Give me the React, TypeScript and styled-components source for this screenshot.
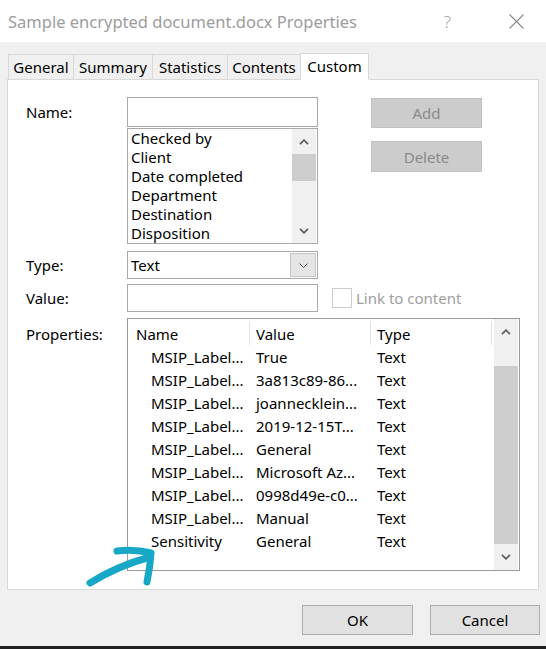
import React from 'react';
import styled, { createGlobalStyle } from 'styled-components';

const GlobalStyle = createGlobalStyle`
  html, body {
    margin: 0;
    padding: 0;
  }
  body {
    background: #f0f0f0;
    font-family: "Noto Sans", "Open Sans", sans-serif;
    font-size: 15px;
    color: #000;
  }
`;

const Window = styled.div`
  position: relative;
  width: 546px;
  height: 649px;
  display: flex;
  flex-direction: column;
  background: #f0f0f0;
  overflow: hidden;
`;

const TitleBar = styled.div`
  height: 42px;
  flex-shrink: 0;
  background: #fff;
  display: flex;
  align-items: center;
  padding-left: 8px;
  color: #9c9c9c;
  font-size: 16.5px;
`;

const TitleText = styled.span`
  flex: 1;
`;

const HelpMark = styled.span`
  font-size: 17px;
  font-weight: 300;
  color: #a0a0a0;
  margin-right: 58px;
`;

const CloseIcon = styled.svg`
  margin-right: 22px;
`;

const Body = styled.div`
  flex: 1;
  display: flex;
  flex-direction: column;
  padding: 11px 7px 0;
`;

const TabStrip = styled.div`
  position: relative;
  z-index: 1;
  display: flex;
  align-items: flex-end;
  height: 27px;
  padding-left: 1px;
  margin-bottom: -1px;
`;

const Tab = styled.div<{ $active?: boolean; $w: number }>`
  box-sizing: border-box;
  width: ${p => p.$w}px;
  height: ${p => (p.$active ? '27px' : '26px')};
  line-height: 24px;
  text-align: center;
  margin-left: -1px;
  border: 1px solid #d9d9d9;
  border-bottom: ${p => (p.$active ? '1px solid #fff' : '1px solid #d9d9d9')};
  background: ${p => (p.$active ? '#fff' : '#f0f0f0')};
  white-space: nowrap;
  &:first-child {
    margin-left: 0;
  }
`;

const Panel = styled.div`
  box-sizing: border-box;
  height: 511px;
  background: #fff;
  border: 1px solid #d9d9d9;
  padding: 17px 0 0 18px;
  display: flex;
  flex-direction: column;
`;

const Row = styled.div<{ $gap?: number }>`
  display: flex;
  align-items: flex-start;
  margin-top: ${p => p.$gap ?? 0}px;
`;

const Label = styled.div<{ $top?: number }>`
  width: 101px;
  flex-shrink: 0;
  padding-top: ${p => p.$top ?? 0}px;
  line-height: 28px;
`;

const FieldColumn = styled.div`
  width: 191px;
  display: flex;
  flex-direction: column;
`;

const TextBox = styled.div<{ $h: number }>`
  box-sizing: border-box;
  width: 191px;
  height: ${p => p.$h}px;
  border: 1px solid #a9a9a9;
  background: #fff;
`;

const ListBox = styled.div`
  box-sizing: border-box;
  margin-top: 1px;
  height: 116px;
  border: 1px solid #a9a9a9;
  display: flex;
  overflow: hidden;
`;

const ListItems = styled.div`
  flex: 1;
  padding-left: 3px;
  line-height: 19px;
  white-space: nowrap;
  overflow: hidden;
`;

const ScrollBar = styled.div<{ $width: number }>`
  width: ${p => p.$width}px;
  margin-right: 1px;
  background: #f0f0f0;
  display: flex;
  flex-direction: column;
  flex-shrink: 0;
`;

const ArrowButton = styled.div<{ $h: number }>`
  height: ${p => p.$h}px;
  display: flex;
  align-items: center;
  justify-content: center;
  flex-shrink: 0;
`;

const Track = styled.div`
  flex: 1;
  display: flex;
  flex-direction: column;
`;

const Thumb = styled.div<{ $top: number; $h: number }>`
  margin-top: ${p => p.$top}px;
  height: ${p => p.$h}px;
  background: #cdcdcd;
`;

const ButtonColumn = styled.div`
  margin-left: 53px;
  margin-top: 1px;
  display: flex;
  flex-direction: column;
  gap: 13px;
`;

const DisabledButton = styled.div<{ $h: number }>`
  box-sizing: border-box;
  width: 111px;
  height: ${p => p.$h}px;
  background: #cccccc;
  border: 1px solid #c2c2c2;
  color: #8a8a8a;
  display: flex;
  align-items: center;
  justify-content: center;
`;

const ComboBox = styled.div`
  box-sizing: border-box;
  width: 191px;
  height: 28px;
  border: 1px solid #a9a9a9;
  display: flex;
  align-items: center;
`;

const ComboText = styled.span`
  flex: 1;
  padding-left: 3px;
`;

const DropButton = styled.div`
  box-sizing: border-box;
  width: 26px;
  height: 24px;
  margin-right: 1px;
  background: #e5e5e5;
  border: 1px solid #c6c6c6;
  display: flex;
  align-items: center;
  justify-content: center;
`;

const CheckBox = styled.div`
  box-sizing: border-box;
  width: 20px;
  height: 20px;
  margin: 4px 0 0 14px;
  border: 1px solid #cccccc;
  background: #fff;
`;

const CheckLabel = styled.span`
  margin-left: 4px;
  line-height: 28px;
  color: #a0a0a0;
`;

const PropList = styled.div`
  box-sizing: border-box;
  width: 393px;
  height: 253px;
  border: 1px solid #9a9a9a;
  display: flex;
`;

const Table = styled.div`
  flex: 1;
  display: flex;
  flex-direction: column;
`;

const HeaderRow = styled.div`
  height: 27px;
  display: grid;
  grid-template-columns: 122px 121px 121px;
`;

const HeaderCell = styled.div<{ $pad: number }>`
  box-sizing: border-box;
  margin-top: 2px;
  height: 24px;
  padding: 2px 0 0 ${p => p.$pad}px;
  line-height: 22px;
  border-right: 1px solid #e5e5e5;
`;

const DataRow = styled.div`
  height: 23px;
  line-height: 23px;
  display: grid;
  grid-template-columns: 122px 121px 121px;
  white-space: nowrap;
`;

const Cell = styled.div<{ $pad: number }>`
  padding-left: ${p => p.$pad}px;
  overflow: hidden;
`;

const Footer = styled.div`
  display: flex;
  justify-content: flex-end;
  gap: 17px;
  margin-top: 15px;
  margin-right: -1px;
`;

const DialogButton = styled.div<{ $w: number }>`
  box-sizing: border-box;
  width: ${p => p.$w}px;
  height: 30px;
  background: #e1e1e1;
  border: 1px solid #adadad;
  display: flex;
  align-items: center;
  justify-content: center;
`;

const BottomEdge = styled.div`
  margin-top: auto;
  height: 3px;
  background: #1e1e1e;
`;

const Marker = styled.svg`
  position: absolute;
  left: 84px;
  top: 544px;
  pointer-events: none;
`;

const Chevron: React.FC<{ up?: boolean }> = ({ up }) => (
  <svg width="10" height="6" viewBox="0 0 10 6">
    <polyline
      points={up ? '1,5.2 5,1.2 9,5.2' : '1,0.8 5,4.8 9,0.8'}
      fill="none"
      stroke="#606060"
      strokeWidth="1.8"
    />
  </svg>
);

type PropRow = {
  name: string;
  value: string;
  type: string;
};

const nameOptions = [
  'Checked by',
  'Client',
  'Date completed',
  'Department',
  'Destination',
  'Disposition',
];

const properties: PropRow[] = [
  { name: 'MSIP_Label...', value: 'True', type: 'Text' },
  { name: 'MSIP_Label...', value: '3a813c89-86...', type: 'Text' },
  { name: 'MSIP_Label...', value: 'joannecklein...', type: 'Text' },
  { name: 'MSIP_Label...', value: '2019-12-15T...', type: 'Text' },
  { name: 'MSIP_Label...', value: 'General', type: 'Text' },
  { name: 'MSIP_Label...', value: 'Microsoft Az...', type: 'Text' },
  { name: 'MSIP_Label...', value: '0998d49e-c0...', type: 'Text' },
  { name: 'MSIP_Label...', value: 'Manual', type: 'Text' },
  { name: 'Sensitivity', value: 'General', type: 'Text' },
];

const tabs = [
  { label: 'General', width: 66 },
  { label: 'Summary', width: 80 },
  { label: 'Statistics', width: 76 },
  { label: 'Contents', width: 74 },
  { label: 'Custom', width: 69 },
];

const App: React.FC = () => {
  return (
    <>
      <GlobalStyle />
      <Window>
        <TitleBar>
          <TitleText>Sample encrypted document.docx Properties</TitleText>
          <HelpMark>?</HelpMark>
          <CloseIcon width="15" height="15" viewBox="0 0 15 15">
            <path d="M0.5 0.5 L14.5 14.5 M14.5 0.5 L0.5 14.5" stroke="#8c8c8c" strokeWidth="1.1" />
          </CloseIcon>
        </TitleBar>

        <Body>
          <TabStrip>
            {tabs.map(t => (
              <Tab key={t.label} $w={t.width} $active={t.label === 'Custom'}>{t.label}</Tab>
            ))}
          </TabStrip>

          <Panel>
            <Row>
              <Label $top={1}>Name:</Label>
              <FieldColumn>
                <TextBox $h={30} />
                <ListBox>
                  <ListItems>
                    {nameOptions.map(o => <div key={o}>{o}</div>)}
                  </ListItems>
                  <ScrollBar $width={24}>
                    <ArrowButton $h={25}><Chevron up /></ArrowButton>
                    <Track>
                      <Thumb $top={0} $h={27} />
                    </Track>
                    <ArrowButton $h={25}><Chevron /></ArrowButton>
                  </ScrollBar>
                </ListBox>
              </FieldColumn>
              <ButtonColumn>
                <DisabledButton $h={30}>Add</DisabledButton>
                <DisabledButton $h={31}>Delete</DisabledButton>
              </ButtonColumn>
            </Row>

            <Row $gap={7}>
              <Label>Type:</Label>
              <ComboBox>
                <ComboText>Text</ComboText>
                <DropButton>
                  <svg width="9" height="5" viewBox="0 0 9 5">
                    <polyline points="0.5,0.5 4.5,4.5 8.5,0.5" fill="none" stroke="#555" strokeWidth="1" />
                  </svg>
                </DropButton>
              </ComboBox>
            </Row>

            <Row $gap={5}>
              <Label>Value:</Label>
              <TextBox $h={28} />
              <CheckBox />
              <CheckLabel>Link to content</CheckLabel>
            </Row>

            <Row $gap={6}>
              <Label $top={2}>Properties:</Label>
              <PropList>
                <Table>
                  <HeaderRow>
                    <HeaderCell $pad={8}>Name</HeaderCell>
                    <HeaderCell $pad={6}>Value</HeaderCell>
                    <HeaderCell $pad={6}>Type</HeaderCell>
                  </HeaderRow>
                  {properties.map((p, i) => (
                    <DataRow key={i}>
                      <Cell $pad={23}>{p.name}</Cell>
                      <Cell $pad={6}>{p.value}</Cell>
                      <Cell $pad={6}>{p.type}</Cell>
                    </DataRow>
                  ))}
                </Table>
                <ScrollBar $width={24}>
                  <ArrowButton $h={25}><Chevron up /></ArrowButton>
                  <Track>
                    <Thumb $top={22} $h={178} />
                  </Track>
                  <ArrowButton $h={26}><Chevron /></ArrowButton>
                </ScrollBar>
              </PropList>
            </Row>
          </Panel>

          <Footer>
            <DialogButton $w={111}>OK</DialogButton>
            <DialogButton $w={110}>Cancel</DialogButton>
          </Footer>
        </Body>

        <BottomEdge />

        <Marker width="76" height="46" viewBox="0 0 76 46">
          <g fill="none" stroke="#17a8c8" strokeWidth="7" strokeLinecap="round" strokeLinejoin="round">
            <path d="M6 39 Q33 22 66 13" />
            <path d="M33 7 Q51 5 67 9 Q66 24 63 38" />
          </g>
        </Marker>
      </Window>
    </>
  );
};

export default App;
